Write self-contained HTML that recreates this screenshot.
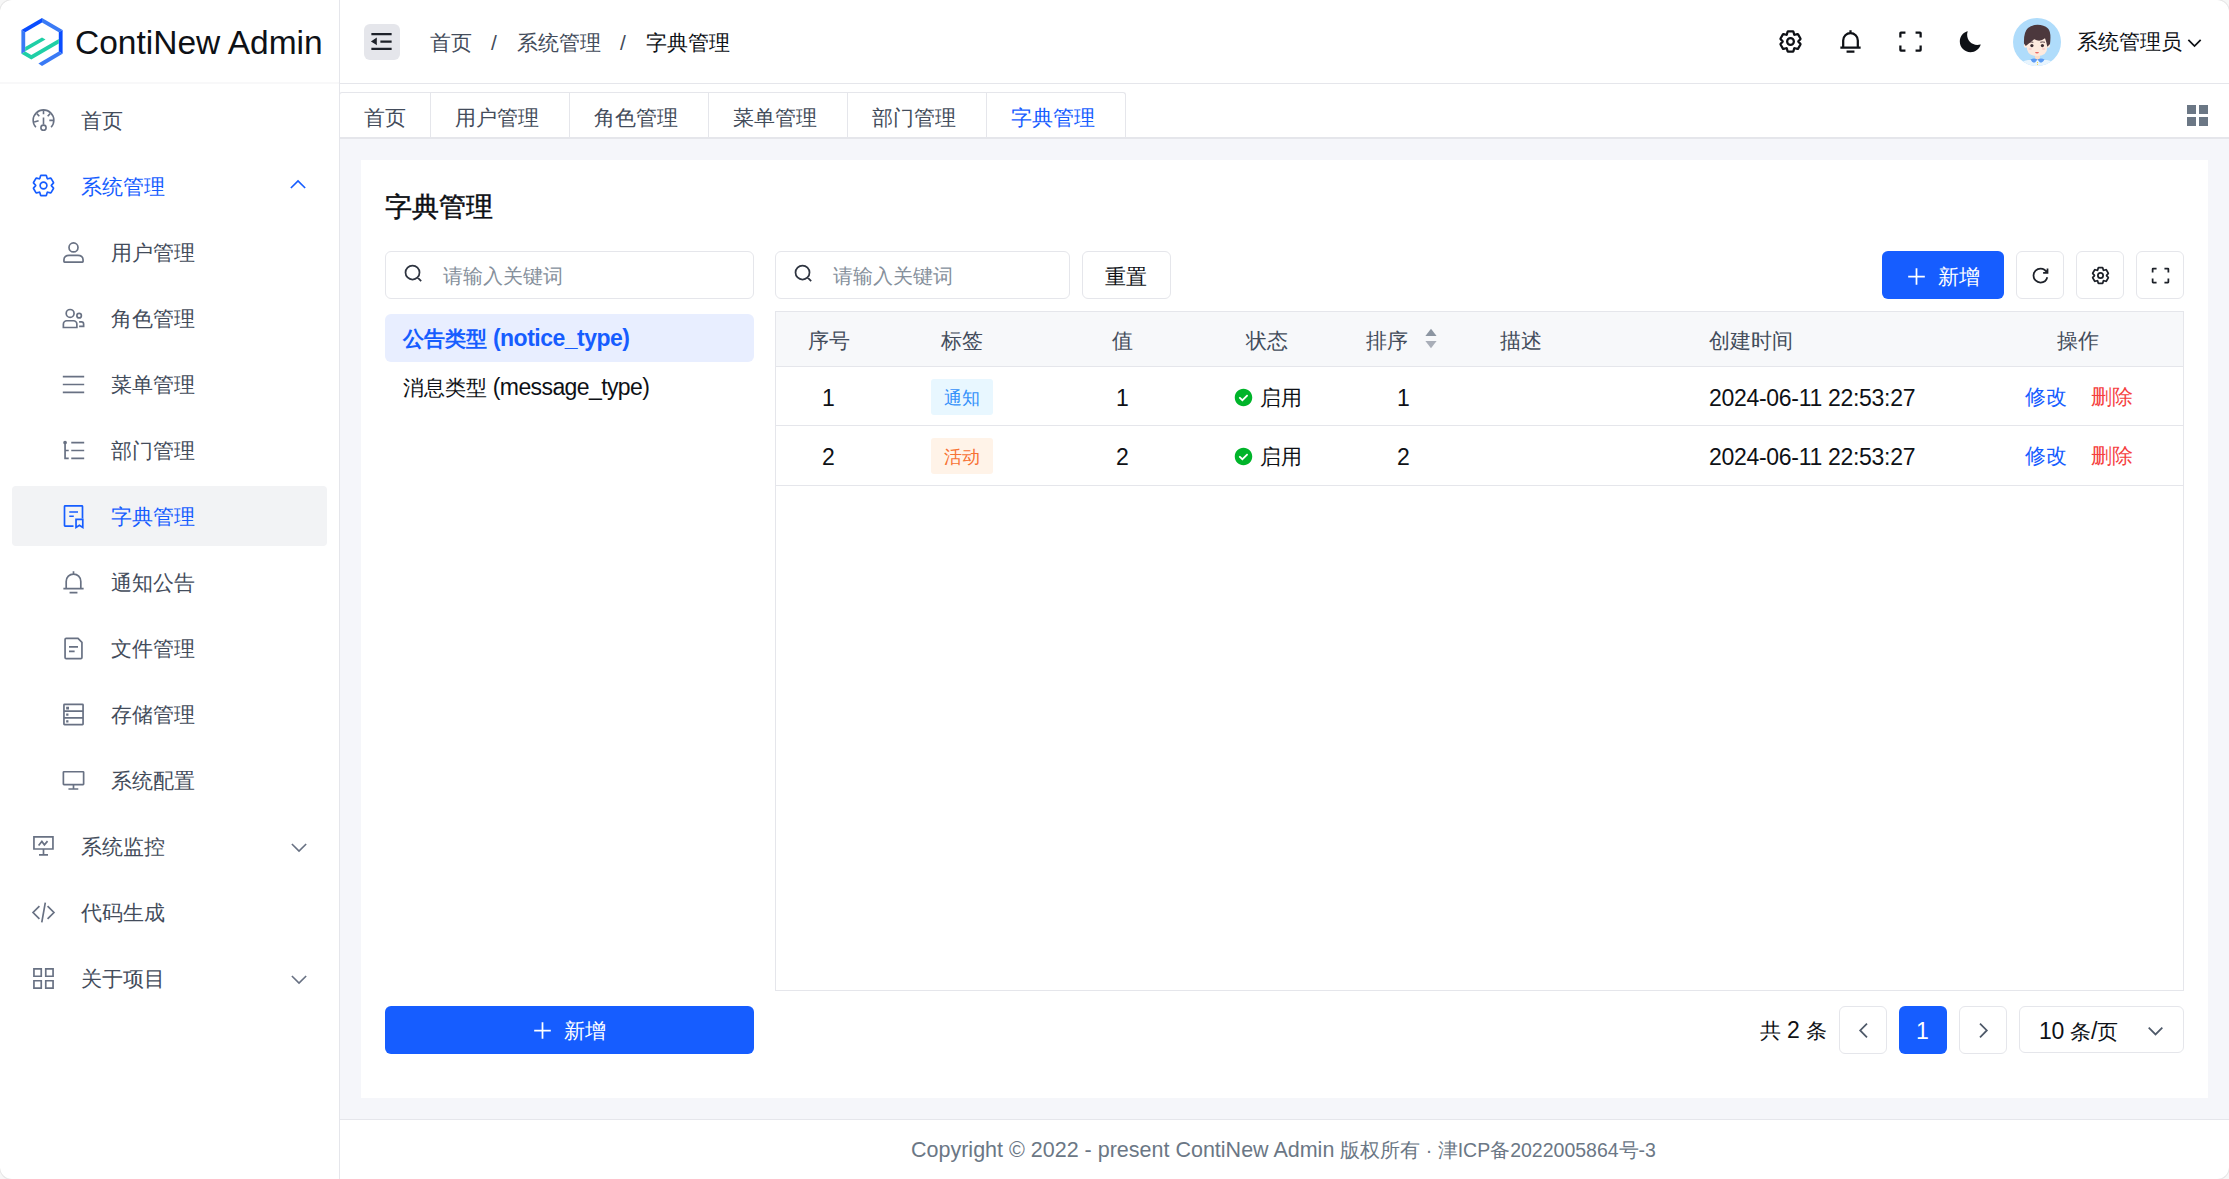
<!DOCTYPE html>
<html><head><meta charset="utf-8">
<style>
*{box-sizing:border-box;margin:0;padding:0}
html,body{width:2229px;height:1179px;overflow:hidden;background:#fff}
body{font-family:"Liberation Sans",sans-serif;color:#0e1116;position:relative}
.a{position:absolute}
.t{position:absolute;white-space:nowrap;font-size:21px;line-height:30px}
svg.i{position:absolute;fill:none;stroke:currentColor;stroke-width:4;stroke-linecap:butt;stroke-linejoin:miter}
#side{left:0;top:0;width:340px;height:1179px;background:#fff;border-right:1px solid #e5e6eb}
#main{left:340px;top:84px;width:1889px;height:1095px;background:#f5f6fa}
.mi{color:#434c5b}
.mi svg.i{stroke-width:3;color:#687183}
.mi svg.i.sel{color:#165dff}
.sel{color:#165dff}
.btn{position:absolute;border:1px solid #e5e6eb;border-radius:6px;background:#fff}
.tab{position:absolute;top:92px;height:47px;border:1px solid #e5e6eb;border-bottom:none;border-right:none;background:#fff;font-size:21px;line-height:46px;text-align:center;color:#4e5969;white-space:nowrap}
.th{position:absolute;top:311px;height:56px;line-height:56px;font-size:21px;color:#4e5969;white-space:nowrap}
.L{font-size:23px;letter-spacing:-0.3px}
.td{position:absolute;font-size:21px;white-space:nowrap;color:#1d2129}
</style></head><body>

<!-- Sidebar -->
<div id="side" class="a"></div>
<div class="a" style="left:0;top:82px;width:339px;height:2px;background:#f8f8f9"></div>

<!-- Logo -->
<svg class="a" style="left:0;top:0" width="80" height="80" viewBox="0 0 80 80">
  <path d="M21.4 30.1 L25.2 32.3 L25.2 51.5 L21.4 53.7Z" fill="#3a7af5"/>
  <path d="M42 18.1 L62.6 30.1 L58.8 32.3 L42 22.5Z" fill="#3a7af5"/>
  <path d="M21.4 30.1 L42 18.1 L42 22.5 L25.2 32.3Z" fill="#0a4dff"/>
  <path d="M62.6 30.1 L62.6 53.7 L58.8 51.5 L58.8 32.3Z" fill="#0a4dff"/>
  <path d="M62.6 53.7 L42 65.9 L38.4 63.4 L58.8 51.5Z" fill="#3a7af5"/>
  <path d="M21.4 53.7 L31.3 59.4 L58.8 43.5 L58.8 39.1 L31.3 55.0 L25.2 51.5Z" fill="#1fcfa6"/>
  <path d="M25.2 47.1 L42 37.4 L45.5 39.4 L25.2 51.3Z" fill="#1fcfa6"/>
</svg>
<div class="t" style="left:75px;top:23px;font-size:33.5px;line-height:40px;color:#0e1116">ContiNew Admin</div>

<!-- Sidebar menu -->
<div class="a" style="left:12px;top:486px;width:315px;height:60px;background:#f2f3f5;border-radius:4px"></div>
<div class="mi">
<svg class="i" style="left:25px;top:100px;stroke-width:1.6" width="40" height="40" viewBox="0 0 40 40"><path d="M10.9 27.3A10.35 10.35 0 1 1 26.1 27.3"/><path d="M18.5 10.2v4M11.9 13.6l2.4 2.6M25.1 13.6l-2.4 2.6M9.2 22l4.4-1.3M28.2 20.4h-3.9M18.5 17.6v6.8"/><circle cx="18.5" cy="27.7" r="2.6"/></svg>
<div class="t" style="left:81px;top:106px">首页</div>
<svg class="i sel" style="left:30px;top:172px" width="27" height="27" viewBox="0 0 48 48"><path d="M18.797 6.732A1 1 0 0 1 19.76 6h8.48a1 1 0 0 1 .964.732l1.285 4.628a1 1 0 0 0 1.213.7l4.651-1.2a1 1 0 0 1 1.116.468l4.24 7.344a1 1 0 0 1-.153 1.2L38.193 23.3a1 1 0 0 0 0 1.402l3.364 3.427a1 1 0 0 1 .153 1.2l-4.24 7.344a1 1 0 0 1-1.116.468l-4.65-1.2a1 1 0 0 0-1.214.7l-1.285 4.628a1 1 0 0 1-.964.732h-8.48a1 1 0 0 1-.963-.732L17.51 36.64a1 1 0 0 0-1.213-.7l-4.65 1.2a1 1 0 0 1-1.116-.468l-4.24-7.344a1 1 0 0 1 .153-1.2L9.809 24.7a1 1 0 0 0 0-1.402l-3.364-3.427a1 1 0 0 1-.153-1.2l4.24-7.344a1 1 0 0 1 1.116-.468l4.65 1.2a1 1 0 0 0 1.213-.7l1.286-4.628Z"/><path d="M30 24a6 6 0 1 1-12 0 6 6 0 0 1 12 0Z"/></svg>
<div class="t sel" style="left:81px;top:172px">系统管理</div>
<svg class="i sel" style="left:287px;top:174px;stroke-width:3.6" width="22" height="22" viewBox="0 0 48 48"><path d="M39.6 30.557 24.043 15 8.487 30.557"/></svg>

<svg class="i" style="left:60px;top:239px" width="27" height="27" viewBox="0 0 48 48"><path d="M7 37c0-4.97 4.03-8 9-8h16c4.97 0 9 3.03 9 8v3a1 1 0 0 1-1 1H8a1 1 0 0 1-1-1v-3Z"/><circle cx="24" cy="15" r="8"/></svg>
<div class="t" style="left:111px;top:238px">用户管理</div>
<svg class="i" style="left:60px;top:305px" width="27" height="27" viewBox="0 0 48 48"><circle cx="18" cy="15" r="7"/><circle cx="34" cy="19" r="4"/><path d="M6 34a6 6 0 0 1 6-6h12a6 6 0 0 1 6 6v6H6v-6ZM34 30h4a4 4 0 0 1 4 4v4h-8"/></svg>
<div class="t" style="left:111px;top:304px">角色管理</div>
<svg class="i" style="left:60px;top:371px" width="27" height="27" viewBox="0 0 48 48"><path d="M5 10h38M5 24h38M5 38h38"/></svg>
<div class="t" style="left:111px;top:370px">菜单管理</div>
<svg class="i" style="left:60px;top:437px" width="27" height="27" viewBox="0 0 48 48"><path d="M20 10h23M20 24h23M20 38h23M9 10v28h6.5M9 24h6.5"/><circle cx="9" cy="9.8" r="2" fill="currentColor" stroke-width="2.6"/></svg>
<div class="t" style="left:111px;top:436px">部门管理</div>
<svg class="i sel" style="left:60px;top:503px" width="27" height="27" viewBox="0 0 48 48"><path d="M40 27V6a1 1 0 0 0-1-1H9a1 1 0 0 0-1 1v34a1 1 0 0 0 1 1h15M16.5 16h15.5M16.5 23.5h8M28.5 29h12v14.5l-6-4-6 4V29Z"/></svg>
<div class="t sel" style="left:111px;top:502px">字典管理</div>
<svg class="i" style="left:60px;top:569px" width="27" height="27" viewBox="0 0 48 48"><path d="M24 9c7.18 0 13 5.82 13 13v13H11V22c0-7.18 5.82-13 13-13Zm0 0V4M6 35h36M17 42h14"/></svg>
<div class="t" style="left:111px;top:568px">通知公告</div>
<svg class="i" style="left:60px;top:635px" width="27" height="27" viewBox="0 0 48 48"><path d="M16 21h16m-16 8h10m11 13H11a2 2 0 0 1-2-2V8a2 2 0 0 1 2-2h21l7 7v27a2 2 0 0 1-2 2Z"/></svg>
<div class="t" style="left:111px;top:634px">文件管理</div>
<svg class="i" style="left:60px;top:701px" width="27" height="27" viewBox="0 0 48 48"><path d="M7 18h34v12H7V18ZM40 6H8a1 1 0 0 0-1 1v11h34V7a1 1 0 0 0-1-1ZM7 30h34v11a1 1 0 0 1-1 1H8a1 1 0 0 1-1-1V30Z"/><path d="M12 11h3v3h-3zM12 23h2v2h-2zM12 35h2v2h-2z" stroke-width="2" fill="currentColor"/></svg>
<div class="t" style="left:111px;top:700px">存储管理</div>
<svg class="i" style="left:60px;top:767px" width="27" height="27" viewBox="0 0 48 48"><path d="M24 31.2v7.9M15 39.1h17.5M7 8.4h34a1 1 0 0 1 1 1v20.8a1 1 0 0 1-1 1H7a1 1 0 0 1-1-1V9.4a1 1 0 0 1 1-1Z"/></svg>
<div class="t" style="left:111px;top:766px">系统配置</div>

<svg class="i" style="left:30px;top:833px" width="27" height="27" viewBox="0 0 48 48"><path d="M7 6.8h33.8v21.6H7Z M24 28.4v10.4 M16 38.8h16"/><path d="M15.3 22.2l5.8-7.3 4.5 6.1 5.6-6.5" stroke-width="3"/></svg>
<div class="t" style="left:81px;top:832px">系统监控</div>
<svg class="i" style="left:288px;top:836px;stroke-width:3.6" width="22" height="22" viewBox="0 0 48 48"><path d="M39.6 17.443 24.043 33 8.487 17.443"/></svg>
<svg class="i" style="left:30px;top:899px" width="27" height="27" viewBox="0 0 48 48"><path d="M16.734 12.686 5.42 24l11.314 11.314m14.521-22.628L42.57 24 31.255 35.314M27.2 6.28l-6.251 35.453"/></svg>
<div class="t" style="left:81px;top:898px">代码生成</div>
<svg class="i" style="left:30px;top:965px" width="27" height="27" viewBox="0 0 48 48"><path d="M7 7h13v13H7zM28 7h13v13H28zM7 28h13v13H7zM28 28h13v13H28z"/></svg>
<div class="t" style="left:81px;top:964px">关于项目</div>
<svg class="i" style="left:288px;top:968px;stroke-width:3.6" width="22" height="22" viewBox="0 0 48 48"><path d="M39.6 17.443 24.043 33 8.487 17.443"/></svg>
</div>

<!-- Header -->
<div class="a" style="left:340px;top:83px;width:1889px;height:1px;background:#e5e6eb"></div>
<div class="a" style="left:364px;top:24px;width:36px;height:36px;background:#e5e6eb;border-radius:6px"></div>
<svg class="i" style="left:368px;top:28px;color:#1d2129" width="27" height="27" viewBox="0 0 48 48"><path d="M42 11H6M42 24H22M42 37H6"/><path d="M13.66 26.912l-4.82-3.118 4.82-3.118v6.236Z" fill="currentColor"/></svg>
<div class="t" style="left:430px;top:28px;color:#434c5b">首页</div>
<div class="t L" style="left:491px;top:28px;color:#434c5b;font-size:21px">/</div>
<div class="t" style="left:517px;top:28px;color:#434c5b">系统管理</div>
<div class="t L" style="left:620px;top:28px;color:#434c5b;font-size:21px">/</div>
<div class="t" style="left:646px;top:28px;color:#0e1116">字典管理</div>

<div style="color:#0e1116">
<svg class="i" style="left:1777px;top:28px" width="27" height="27" viewBox="0 0 48 48"><path d="M18.797 6.732A1 1 0 0 1 19.76 6h8.48a1 1 0 0 1 .964.732l1.285 4.628a1 1 0 0 0 1.213.7l4.651-1.2a1 1 0 0 1 1.116.468l4.24 7.344a1 1 0 0 1-.153 1.2L38.193 23.3a1 1 0 0 0 0 1.402l3.364 3.427a1 1 0 0 1 .153 1.2l-4.24 7.344a1 1 0 0 1-1.116.468l-4.65-1.2a1 1 0 0 0-1.214.7l-1.285 4.628a1 1 0 0 1-.964.732h-8.48a1 1 0 0 1-.963-.732L17.51 36.64a1 1 0 0 0-1.213-.7l-4.65 1.2a1 1 0 0 1-1.116-.468l-4.24-7.344a1 1 0 0 1 .153-1.2L9.809 24.7a1 1 0 0 0 0-1.402l-3.364-3.427a1 1 0 0 1-.153-1.2l4.24-7.344a1 1 0 0 1 1.116-.468l4.65 1.2a1 1 0 0 0 1.213-.7l1.286-4.628Z"/><path d="M30 24a6 6 0 1 1-12 0 6 6 0 0 1 12 0Z"/></svg>
<svg class="i" style="left:1837px;top:28px" width="27" height="27" viewBox="0 0 48 48"><path d="M24 9c7.18 0 13 5.82 13 13v13H11V22c0-7.18 5.82-13 13-13Zm0 0V4M6 35h36M17 42h14"/></svg>
<svg class="i" style="left:1897px;top:28px" width="27" height="27" viewBox="0 0 48 48"><path d="M42 17V9a1 1 0 0 0-1-1h-8M6 17V9a1 1 0 0 1 1-1h8m27 23v8a1 1 0 0 1-1 1h-8M6 31v8a1 1 0 0 0 1 1h8"/></svg>
<svg class="i" style="left:1957px;top:28px" width="27" height="27" viewBox="0 0 48 48"><path fill="currentColor" stroke="none" d="M42.108 29.769c.124-.387-.258-.736-.645-.613A17.99 17.99 0 0 1 36 30c-9.941 0-18-8.059-18-18 0-1.904.296-3.74.844-5.463.123-.387-.226-.768-.613-.645C10.558 8.334 5 15.518 5 24c0 10.493 8.507 19 19 19 8.482 0 15.666-5.558 18.108-13.231Z"/></svg>
</div>

<!-- Avatar -->
<svg class="a" style="left:2013px;top:18px" width="48" height="48" viewBox="0 0 48 48">
  <defs><clipPath id="cc"><circle cx="24" cy="24" r="24"/></clipPath></defs>
  <circle cx="24" cy="24" r="24" fill="#afdcfb"/>
  <g clip-path="url(#cc)">
    <path d="M4 52 Q6 43 15 42 H34 Q42 43 44 52Z" fill="#e9f5fe"/>
    <rect x="22" y="36" width="5" height="6" fill="#fbdcc8"/>
    <path d="M24.5 41.5 Q21 39.5 17.5 41.5 Q19 44.8 22 44.6 Z M24.5 41.5 Q28 39.5 31.5 41.5 Q30 44.8 27 44.6Z" fill="#5b9bf3"/>
    <circle cx="24.5" cy="44.6" r="0.55" fill="#f5d33b"/><circle cx="24.5" cy="46.5" r="0.55" fill="#f5d33b"/>
    <ellipse cx="12.7" cy="27.5" rx="1.8" ry="2.2" fill="#fdeade"/>
    <ellipse cx="35.2" cy="27.5" rx="1.8" ry="2.2" fill="#fdeade"/>
    <path d="M13.8 22 Q13.8 15 24 15 Q34.3 15 34.3 22 V29 Q34.3 38 24 38 Q13.8 38 13.8 29Z" fill="#fdeade"/>
    <path d="M11 25.5 Q10.5 14 15 10 Q19 6.8 24.5 6.8 Q31 6.8 35 10.5 Q38.5 14 37 26 L34.3 28.7 Q33.5 24 32 20.3 Q27 24.5 21.3 21.3 Q17.5 24 12.8 28 Z" fill="#4c383d"/>
    <path d="M16.1 24.3 Q18 23.6 20.3 24.3 M27.3 24.3 Q29.5 23.6 32 24.3" stroke="#4c383d" stroke-width="0.9" fill="none"/>
    <circle cx="18.9" cy="27.6" r="1.6" fill="#3c2e33"/><circle cx="29.4" cy="27.6" r="1.6" fill="#3c2e33"/>
    <ellipse cx="17.1" cy="31" rx="1.7" ry="0.9" fill="#f9cfcc"/><ellipse cx="30.6" cy="31" rx="1.7" ry="0.9" fill="#f9cfcc"/>
    <path d="M22 34 H26 Q25.5 35.5 24 35.5 Q22.5 35.5 22 34Z" fill="#ef6b66"/>
  </g>
</svg>
<div class="t" style="left:2077px;top:27px;color:#0e1116">系统管理员</div>
<svg class="i" style="left:2185px;top:33px;color:#0e1116;stroke-width:4.5" width="19" height="19" viewBox="0 0 48 48"><path d="M39.6 17.443 24.043 33 8.487 17.443"/></svg>

<!-- Main bg -->
<div id="main" class="a"></div>
<div class="a" style="left:340px;top:84px;width:1889px;height:55px;background:#fff;border-bottom:2px solid #e5e6eb"></div>

<!-- Tabs -->
<div class="a" style="left:339px;top:92px;width:787px;height:46px;border:1px solid #e5e6eb;border-bottom:none;border-radius:3px 3px 0 0"></div>
<div class="a" style="left:430px;top:92px;width:1px;height:46px;background:#e5e6eb"></div>
<div class="a" style="left:569px;top:92px;width:1px;height:46px;background:#e5e6eb"></div>
<div class="a" style="left:708px;top:92px;width:1px;height:46px;background:#e5e6eb"></div>
<div class="a" style="left:847px;top:92px;width:1px;height:46px;background:#e5e6eb"></div>
<div class="a" style="left:986px;top:92px;width:1px;height:46px;background:#e5e6eb"></div>
<div class="t" style="left:364px;top:103px;color:#434c5b">首页</div>
<div class="t" style="left:455px;top:103px;color:#434c5b">用户管理</div>
<div class="t" style="left:594px;top:103px;color:#434c5b">角色管理</div>
<div class="t" style="left:733px;top:103px;color:#434c5b">菜单管理</div>
<div class="t" style="left:872px;top:103px;color:#434c5b">部门管理</div>
<div class="t" style="left:1011px;top:103px;color:#165dff">字典管理</div>
<svg class="a" style="left:2187px;top:105px" width="21" height="21" viewBox="0 0 21 21"><path d="M0 0h9v9H0zM12 0h9v9h-9zM0 12h9v9H0zM12 12h9v9h-9z" fill="#6b7785"/></svg>

<!-- Card -->
<div class="a" style="left:361px;top:160px;width:1847px;height:938px;background:#fff"></div>
<div class="t" style="left:385px;top:189px;font-size:27px;line-height:36px;color:#0d0f14;-webkit-text-stroke:0.45px #0d0f14">字典管理</div>

<!-- Left panel -->
<div class="btn" style="left:385px;top:251px;width:369px;height:48px;border-radius:6px"></div>
<svg class="i" style="left:403px;top:263px;color:#2e3440" width="21" height="21" viewBox="0 0 48 48"><path d="M33.072 33.071c6.248-6.248 6.248-16.379 0-22.627-6.249-6.249-16.38-6.249-22.628 0-6.248 6.248-6.248 16.379 0 22.627 6.248 6.248 16.38 6.248 22.628 0Zm0 0 8.485 8.485"/></svg>
<div class="t" style="left:443px;top:261px;color:#86909c;font-size:19.5px">请输入关键词</div>
<div class="a" style="left:385px;top:314px;width:369px;height:48px;background:#e8eeff;border-radius:6px"></div>
<div class="t" style="left:403px;top:323px;color:#165dff;font-weight:700">公告类型<span class="L" style="letter-spacing:-0.5px"> (notice_type)</span></div>
<div class="t" style="left:403px;top:372px;color:#0e1116">消息类型<span class="L" style="letter-spacing:-0.6px"> (message_type)</span></div>
<div class="a" style="left:385px;top:1006px;width:369px;height:48px;background:#165dff;border-radius:6px"></div>
<svg class="i" style="left:532px;top:1020px;color:#fff" width="21" height="21" viewBox="0 0 48 48"><path d="M5 24h38M24 5v38"/></svg>
<div class="t" style="left:564px;top:1016px;color:#fff">新增</div>

<!-- Right toolbar -->
<div class="btn" style="left:775px;top:251px;width:295px;height:48px;border-radius:6px"></div>
<svg class="i" style="left:793px;top:263px;color:#2e3440" width="21" height="21" viewBox="0 0 48 48"><path d="M33.072 33.071c6.248-6.248 6.248-16.379 0-22.627-6.249-6.249-16.38-6.249-22.628 0-6.248 6.248-6.248 16.379 0 22.627 6.248 6.248 16.38 6.248 22.628 0Zm0 0 8.485 8.485"/></svg>
<div class="t" style="left:833px;top:261px;color:#86909c;font-size:19.5px">请输入关键词</div>
<div class="btn" style="left:1082px;top:251px;width:89px;height:48px"></div>
<div class="t" style="left:1105px;top:262px;color:#0e1116">重置</div>

<div class="a" style="left:1882px;top:251px;width:122px;height:48px;background:#165dff;border-radius:6px"></div>
<svg class="i" style="left:1906px;top:266px;color:#fff" width="21" height="21" viewBox="0 0 48 48"><path d="M5 24h38M24 5v38"/></svg>
<div class="t" style="left:1938px;top:262px;color:#fff">新增</div>
<div class="btn" style="left:2016px;top:251px;width:48px;height:48px"></div>
<svg class="i" style="left:2030px;top:265px;color:#1d2129" width="21" height="21" viewBox="0 0 48 48"><path d="M38.837 18C36.463 12.136 30.715 8 24 8 15.163 8 8 15.163 8 24s7.163 16 16 16c7.455 0 13.72-5.1 15.496-12M40 8v10H30"/></svg>
<div class="btn" style="left:2076px;top:251px;width:48px;height:48px"></div>
<svg class="i" style="left:2090px;top:265px;color:#1d2129" width="21" height="21" viewBox="0 0 48 48"><path d="M18.797 6.732A1 1 0 0 1 19.76 6h8.48a1 1 0 0 1 .964.732l1.285 4.628a1 1 0 0 0 1.213.7l4.651-1.2a1 1 0 0 1 1.116.468l4.24 7.344a1 1 0 0 1-.153 1.2L38.193 23.3a1 1 0 0 0 0 1.402l3.364 3.427a1 1 0 0 1 .153 1.2l-4.24 7.344a1 1 0 0 1-1.116.468l-4.65-1.2a1 1 0 0 0-1.214.7l-1.285 4.628a1 1 0 0 1-.964.732h-8.48a1 1 0 0 1-.963-.732L17.51 36.64a1 1 0 0 0-1.213-.7l-4.65 1.2a1 1 0 0 1-1.116-.468l-4.24-7.344a1 1 0 0 1 .153-1.2L9.809 24.7a1 1 0 0 0 0-1.402l-3.364-3.427a1 1 0 0 1-.153-1.2l4.24-7.344a1 1 0 0 1 1.116-.468l4.65 1.2a1 1 0 0 0 1.213-.7l1.286-4.628Z"/><path d="M30 24a6 6 0 1 1-12 0 6 6 0 0 1 12 0Z"/></svg>
<div class="btn" style="left:2136px;top:251px;width:48px;height:48px"></div>
<svg class="i" style="left:2150px;top:265px;color:#1d2129" width="21" height="21" viewBox="0 0 48 48"><path d="M42 17V9a1 1 0 0 0-1-1h-8M6 17V9a1 1 0 0 1 1-1h8m27 23v8a1 1 0 0 1-1 1h-8M6 31v8a1 1 0 0 0 1 1h8"/></svg>

<!-- Table -->
<div class="a" style="left:775px;top:311px;width:1409px;height:680px;border:1px solid #e5e6eb"></div>
<div class="a" style="left:776px;top:312px;width:1407px;height:55px;background:#f7f8fa;border-bottom:1px solid #e5e6eb"></div>
<div class="a" style="left:776px;top:425px;width:1407px;height:1px;background:#e5e6eb"></div>
<div class="a" style="left:776px;top:485px;width:1407px;height:1px;background:#e5e6eb"></div>
<div class="t" style="left:808px;top:326px;color:#434c5b">序号</div>
<div class="t" style="left:941px;top:326px;color:#434c5b">标签</div>
<div class="t" style="left:1112px;top:326px;color:#434c5b">值</div>
<div class="t" style="left:1246px;top:326px;color:#434c5b">状态</div>
<div class="t" style="left:1366px;top:326px;color:#434c5b">排序</div>
<svg class="a" style="left:1424px;top:328px" width="14" height="21" viewBox="0 0 14 21"><path d="M7 0.7L12.6 8H1.4Z" fill="#8c95a1"/><path d="M7 20.3L12.6 13.1H1.4Z" fill="#a9aeb8"/></svg>
<div class="t" style="left:1500px;top:326px;color:#434c5b">描述</div>
<div class="t" style="left:1709px;top:326px;color:#434c5b">创建时间</div>
<div class="t" style="left:2057px;top:326px;color:#434c5b">操作</div>

<div class="t L" style="left:822px;top:383px">1</div>
<div class="a" style="left:931px;top:379px;width:62px;height:36px;background:#e8f7ff;border-radius:3px"></div>
<div class="t" style="left:944px;top:383px;font-size:18px;color:#3491fa">通知</div>
<div class="t L" style="left:1116px;top:383px">1</div>
<svg class="a" style="left:1233px;top:387px" width="21" height="21" viewBox="0 0 48 48"><path fill-rule="evenodd" clip-rule="evenodd" d="M24 44c11.046 0 20-8.954 20-20S35.046 4 24 4 4 12.954 4 24s8.954 20 20 20Zm10.207-24.793-1.414-1.414a1 1 0 0 0-1.414 0l-9.9 9.9-4.95-4.95a1 1 0 0 0-1.414 0l-1.414 1.414a1 1 0 0 0 0 1.414l7.07 7.072a1 1 0 0 0 1.415 0l12.021-12.022a1 1 0 0 0 0-1.414Z" fill="#00b42a" stroke="none"/></svg>
<div class="t" style="left:1260px;top:383px">启用</div>
<div class="t L" style="left:1397px;top:383px">1</div>
<div class="t" style="left:1709px;top:383px;font-size:23px;letter-spacing:-0.3px">2024-06-11 22:53:27</div>
<div class="t" style="left:2025px;top:382px;color:#165dff">修改</div>
<div class="t" style="left:2091px;top:382px;color:#f53f3f">删除</div>

<div class="t L" style="left:822px;top:442px">2</div>
<div class="a" style="left:931px;top:438px;width:62px;height:36px;background:#fff3e8;border-radius:3px"></div>
<div class="t" style="left:944px;top:442px;font-size:18px;color:#f77234">活动</div>
<div class="t L" style="left:1116px;top:442px">2</div>
<svg class="a" style="left:1233px;top:446px" width="21" height="21" viewBox="0 0 48 48"><path fill-rule="evenodd" clip-rule="evenodd" d="M24 44c11.046 0 20-8.954 20-20S35.046 4 24 4 4 12.954 4 24s8.954 20 20 20Zm10.207-24.793-1.414-1.414a1 1 0 0 0-1.414 0l-9.9 9.9-4.95-4.95a1 1 0 0 0-1.414 0l-1.414 1.414a1 1 0 0 0 0 1.414l7.07 7.072a1 1 0 0 0 1.415 0l12.021-12.022a1 1 0 0 0 0-1.414Z" fill="#00b42a" stroke="none"/></svg>
<div class="t" style="left:1260px;top:442px">启用</div>
<div class="t L" style="left:1397px;top:442px">2</div>
<div class="t" style="left:1709px;top:442px;font-size:23px;letter-spacing:-0.3px">2024-06-11 22:53:27</div>
<div class="t" style="left:2025px;top:441px;color:#165dff">修改</div>
<div class="t" style="left:2091px;top:441px;color:#f53f3f">删除</div>

<!-- Pagination -->
<div class="t" style="left:1760px;top:1015px">共<span class="L"> 2 </span>条</div>
<div class="btn" style="left:1839px;top:1006px;width:48px;height:48px"></div>
<svg class="i" style="left:1853px;top:1020px;color:#4e5969" width="21" height="21" viewBox="0 0 48 48"><path d="M32 8.4 16.444 23.956 32 39.513"/></svg>
<div class="a" style="left:1899px;top:1006px;width:48px;height:48px;background:#165dff;border-radius:6px"></div>
<div class="t L" style="left:1916px;top:1016px;color:#fff">1</div>
<div class="btn" style="left:1959px;top:1006px;width:48px;height:48px"></div>
<svg class="i" style="left:1973px;top:1020px;color:#4e5969" width="21" height="21" viewBox="0 0 48 48"><path d="m16 39.513 15.556-15.557L16 8.4"/></svg>
<div class="btn" style="left:2019px;top:1006px;width:165px;height:47px"></div>
<div class="t" style="left:2039px;top:1016px"><span class="L">10 </span>条<span class="L">/</span>页</div>
<svg class="i" style="left:2145px;top:1020px;color:#4e5969" width="21" height="21" viewBox="0 0 48 48"><path d="M39.6 17.443 24.043 33 8.487 17.443"/></svg>

<!-- Footer -->
<div class="a" style="left:340px;top:1119px;width:1889px;height:60px;background:#fff;border-top:1px solid #e5e6eb"></div>
<div class="t" style="left:911px;top:1135px;font-size:19.5px;color:#6b7785"><span style="font-size:21.5px">Copyright © 2022 - present ContiNew Admin </span>版权所有 · 津ICP备2022005864号-3</div>

<div class="a" style="left:-20px;top:-20px;width:2269px;height:1219px;border:20px solid #f7f7f7;border-radius:32px;pointer-events:none"></div>
<div class="a" style="left:0;top:0;width:2229px;height:1179px;border:1px solid rgba(0,0,0,0);border-radius:12px;box-shadow:0 0 0 1px #e6e6e6;pointer-events:none;clip-path:inset(0)"></div>
</body></html>
